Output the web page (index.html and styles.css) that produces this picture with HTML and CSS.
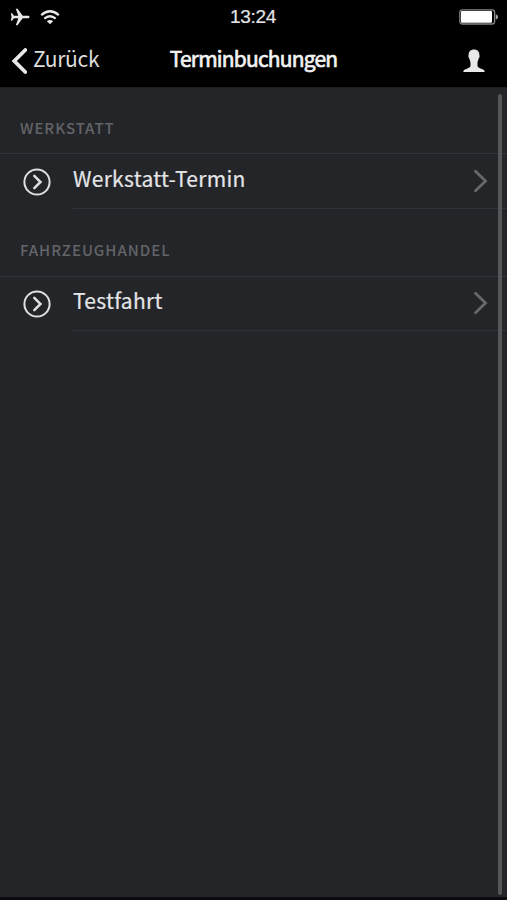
FILE: index.html
```html
<!DOCTYPE html>
<html lang="de">
<head>
<meta charset="utf-8">
<title>Terminbuchungen</title>
<link rel="stylesheet" href="styles.css">
</head>
<body>
<div class="app">
  <header class="header">
    <div class="status">
      <div class="signals">
        <svg class="plane" width="20" height="18" viewBox="0 0 20 18"><path d="M19.500 9c0 .8-.7 1.300-1.800 1.300h-5L7.500 17.300H5.800l2.500-7H4L2 12.800H.8L1.600 9 .8 5.200H2l2 2.500h4.300L5.800.7h1.700l5.200 7h5c1.100 0 1.800.5 1.800 1.300z"/></svg>
        <svg width="20" height="15" viewBox="0 0 20 15"><path class="wave" d="M1.200 5.100Q10-2.600 18.800 5.100M4.300 8.600Q10 3.900 15.700 8.600"/><path d="M6.800 11.200Q10 8.800 13.200 11.200L10 14.300z"/></svg>
      </div>
      <span class="time">13:24</span>
      <svg class="battery" width="39" height="16" viewBox="0 0 39 16"><rect class="case" x=".8" y=".8" width="34.800" height="14.200" rx="2.500"/><rect x="2" y="2" width="31" height="11.800" rx="1"/><path class="tip" d="M36.800 5.300Q39 6 39 8t-2.200 2.600z"/></svg>
    </div>
    <nav class="nav">
      <a class="back"><svg width="16" height="26" viewBox="0 0 16 26"><path d="M14.300 2 3.300 13l11 11"/></svg><span>Zurück</span></a>
      <h1 class="title">Terminbuchungen</h1>
      <svg class="user" width="22" height="24" viewBox="0 0 22 24"><path d="M11 .5c3.400 0 5.400 2.100 5.400 5.600 0 .7.400 1.200.1 2-.2.700-.6.800-.8 1.500-.5 2-1.200 3-1.200 4.700v2.200c0 1.800 1.600 2.500 4.300 3.400 1.800.6 2.900 1.200 2.900 3.100H.3c0-1.900 1.100-2.500 2.900-3.100 2.700-.9 4.300-1.600 4.300-3.400v-2.200c0-1.700-.7-2.700-1.200-4.700-.2-.7-.6-.8-.8-1.500-.3-.8.100-1.300.1-2C5.600 2.600 7.600.5 11 .5z"/></svg>
    </nav>
  </header>
  <main class="content">
    <section class="group">
      <h2 class="heading"><span class="label">WERKSTATT</span></h2>
      <div class="row">
        <svg class="circle" width="28" height="28" viewBox="0 0 28 28"><circle cx="14" cy="14" r="12.600"/><path d="m11.300 7.800 6.200 6.200-6.200 6.200"/></svg>
        <div class="cell"><span>Werkstatt-Termin</span><svg class="chevron" width="15" height="24" viewBox="0 0 15 24"><path d="m2.500 2.300 10 9.700-10 9.700"/></svg></div>
      </div>
    </section>
    <section class="group">
      <h2 class="heading tall"><span class="label">FAHRZEUGHANDEL</span></h2>
      <div class="row short">
        <svg class="circle" width="28" height="28" viewBox="0 0 28 28"><circle cx="14" cy="14" r="12.600"/><path d="m11.300 7.800 6.200 6.200-6.200 6.200"/></svg>
        <div class="cell"><span>Testfahrt</span><svg class="chevron" width="15" height="24" viewBox="0 0 15 24"><path d="m2.500 2.300 10 9.700-10 9.700"/></svg></div>
      </div>
    </section>
    <div class="scrollbar"></div>
  </main>
</div>
</body>
</html>
```
FILE: styles.css
```css
* { box-sizing: border-box; }
body { margin: 0; background: #000; font-family: "Noto Sans CJK JP", "Noto Sans", sans-serif; color: #e4e5e7; }
svg { display: block; flex: none; fill: #e8e8e8; }
h1, h2 { margin: 0; font-weight: 400; }
.app { height: 900px; display: flex; flex-direction: column; overflow: hidden; border-bottom: 3px solid #0c0c10; }
.header { height: 88px; background: #000; flex: none; border-bottom: 1px solid #1d1e22; }
.status { height: 34px; display: grid; grid-template-columns: 1fr auto 1fr; align-items: center; padding: 0 9px 0 10px; }
.signals { display: flex; gap: 10px; align-items: center; }
.wave { fill: none; stroke: #e8e8e8; stroke-width: 2.2; }
.time { font: 19px/34px "Liberation Sans", sans-serif; letter-spacing: -.3px; margin-right: 2px; -webkit-text-stroke: .2px; }
.battery { justify-self: end; fill: #fff; }
.case { fill: none; stroke: #858585; stroke-width: 1.3; }
.tip { fill: #aaa; }
.nav { height: 53px; display: grid; grid-template-columns: 1fr auto 1fr; align-items: center; padding: 0 11px; }
.back { display: flex; align-items: center; gap: 6px; font-size: 21px; line-height: 46px; color: #dcdcdc; }
.back svg { fill: none; stroke: #e8e8e8; stroke-width: 3.8; stroke-linecap: round; }
.back span { letter-spacing: -.3px; margin-top: -5px; }
.title { font-size: 21px; line-height: 46px; font-weight: 400; letter-spacing: -.8px; color: #f2f2f2; margin-top: -5px; -webkit-text-stroke: .65px; }
.user { justify-self: end; margin-right: 11px; }
.content { flex: 1; background: #242529; position: relative; }
.group { height: 122px; }
.heading { height: 66px; border-bottom: 1px solid #34353a; padding: 16px 0 0 20px; font-size: 15px; line-height: 48px; font-weight: 500; color: #636468; }
.tall { height: 67px; }
.label { letter-spacing: .97px; }
.row { height: 55px; display: flex; padding-left: 23px; }
.circle { margin-top: 14px; fill: none; stroke: #dedfe1; stroke-width: 2; }
.circle path { stroke-width: 2.5; stroke-linecap: round; }
.cell { flex: 1; margin-left: 22px; display: flex; justify-content: space-between; border-bottom: 1px solid #303136; padding-right: 19px; font-size: 21px; line-height: 49px; -webkit-text-stroke: .2px; }
.cell span { letter-spacing: .3px; }
.chevron { margin-top: 15px; fill: none; stroke: #68696d; stroke-width: 2.8; stroke-linecap: round; }
.short { height: 54px; }
.short .circle { margin-top: 13px; }
.short .chevron { margin-top: 14px; }
.short .cell { line-height: 47px; }
.scrollbar { position: absolute; right: 5px; top: 6px; width: 4px; height: 801px; border-radius: 2px; background: #55565a; }
```
